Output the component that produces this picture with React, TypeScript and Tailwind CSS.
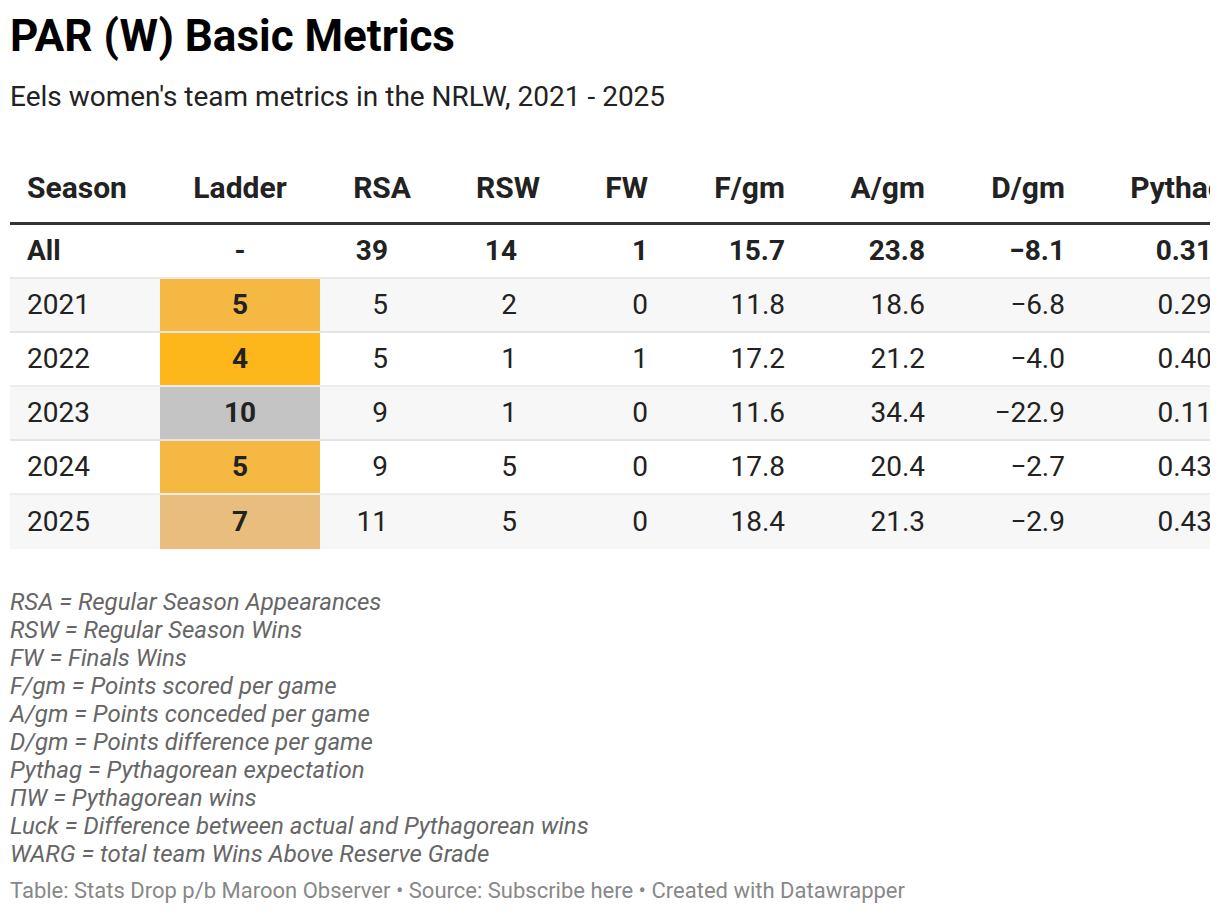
import React from "react";

type Row = {
  season: string;
  ladder: string;
  ladderBg: string;
  rsa: string;
  rsw: string;
  fw: string;
  fgm: string;
  agm: string;
  dgm: string;
  pythag: string;
  pw: string;
  luck: string;
  warg: string;
};

const rows: Row[] = [
  { season: "2021", ladder: "5", ladderBg: "bg-[#f5b843]", rsa: "5", rsw: "2", fw: "0", fgm: "11.8", agm: "18.6", dgm: "−6.8", pythag: "0.29", pw: "1.4", luck: "0.6", warg: "-0.3" },
  { season: "2022", ladder: "4", ladderBg: "bg-[#fdb71b]", rsa: "5", rsw: "1", fw: "1", fgm: "17.2", agm: "21.2", dgm: "−4.0", pythag: "0.40", pw: "2.0", luck: "-1.0", warg: "0.4" },
  { season: "2023", ladder: "10", ladderBg: "bg-[#c4c4c4]", rsa: "9", rsw: "1", fw: "0", fgm: "11.6", agm: "34.4", dgm: "−22.9", pythag: "0.11", pw: "1.0", luck: "0.0", warg: "-1.2" },
  { season: "2024", ladder: "5", ladderBg: "bg-[#f5b843]", rsa: "9", rsw: "5", fw: "0", fgm: "17.8", agm: "20.4", dgm: "−2.7", pythag: "0.43", pw: "3.9", luck: "1.1", warg: "0.8" },
  { season: "2025", ladder: "7", ladderBg: "bg-[#e8bd7d]", rsa: "11", rsw: "5", fw: "0", fgm: "18.4", agm: "21.3", dgm: "−2.9", pythag: "0.43", pw: "4.7", luck: "0.3", warg: "0.5" },
];

const notes = [
  "RSA = Regular Season Appearances",
  "RSW = Regular Season Wins",
  "FW = Finals Wins",
  "F/gm = Points scored per game",
  "A/gm = Points conceded per game",
  "D/gm = Points difference per game",
  "Pythag = Pythagorean expectation",
  "ΠW = Pythagorean wins",
  "Luck = Difference between actual and Pythagorean wins",
  "WARG = total team Wins Above Reserve Grade",
];

// shared cell widths for header and body
const w = {
  season: "w-[150px] shrink-0 pl-[17px] text-left",
  ladder: "w-[160px] shrink-0 text-center",
  rsa: "w-[110px] shrink-0 text-right",
  rsw: "w-[130px] shrink-0 text-right",
  fw: "w-[108px] shrink-0 text-right pr-[20px]",
  fgm: "w-[137px] shrink-0 text-right pr-[20px]",
  agm: "w-[140px] shrink-0 text-right pr-[20px]",
  dgm: "w-[140px] shrink-0 text-right pr-[20px]",
  pythag: "w-[145px] shrink-0 text-right",
  rest: "w-[120px] shrink-0 text-right pr-[20px]",
};

export default function App() {
  return (
    <div
      className="w-[1220px] h-[914px] overflow-hidden bg-white text-[#222] px-[10px] pt-[10px]"
      style={{ fontFamily: "Roboto, 'Liberation Sans', sans-serif" }}
    >
      <h1 className="text-[44px] leading-[52px] font-bold text-black">PAR (W) Basic Metrics</h1>
      <p className="mt-[18px] text-[28px] leading-[34px] text-[#222]">
        Eels women's team metrics in the NRLW, 2021 - 2025
      </p>

      {/* table */}
      <div className="mt-[39px] overflow-hidden">
        <div className="w-[1600px]">
          <div className="flex items-end h-[72px] pb-[16px] text-[30px] leading-[36px] font-bold border-b-[3px] border-[#333]">
            <div className={w.season}>Season</div>
            <div className={w.ladder}>Ladder</div>
            <div className={`${w.rsa} pr-[19px]`}>RSA</div>
            <div className={`${w.rsw} pr-[20px]`}>RSW</div>
            <div className={w.fw}>FW</div>
            <div className={w.fgm}>F/gm</div>
            <div className={w.agm}>A/gm</div>
            <div className={w.dgm}>D/gm</div>
            <div className={`${w.pythag} pr-[5px]`}>Pythag</div>
            <div className={w.rest}>ΠW</div>
            <div className={w.rest}>Luck</div>
            <div className={w.rest}>WARG</div>
          </div>

          <div className="flex items-center h-[54px] border-b-2 border-[#e8e8e8] text-[28px] leading-[34px] font-bold">
            <div className={w.season}>All</div>
            <div className={w.ladder}>-</div>
            <div className={`${w.rsa} pr-[42px]`}>39</div>
            <div className={`${w.rsw} pr-[43px]`}>14</div>
            <div className={w.fw}>1</div>
            <div className={w.fgm}>15.7</div>
            <div className={w.agm}>23.8</div>
            <div className={w.dgm}>−8.1</div>
            <div className={`${w.pythag} pr-[18px]`}>0.31</div>
            <div className={w.rest}>12.2</div>
            <div className={w.rest}>1.8</div>
            <div className={w.rest}>-0.2</div>
          </div>

          {rows.map((r, i) => (
            <div
              key={r.season}
              className={`flex h-[54px] text-[28px] leading-[34px] ${i % 2 === 0 ? "bg-[#f7f7f7]" : "bg-white"} ${
                i < rows.length - 1 ? "border-b-2 border-black/[0.07]" : "h-[52px]"
              }`}
            >
              <div className={`${w.season} self-center`}>{r.season}</div>
              <div className={`${w.ladder} ${r.ladderBg} font-bold flex items-center justify-center`}>{r.ladder}</div>
              <div className={`${w.rsa} pr-[42px] self-center`}>{r.rsa}</div>
              <div className={`${w.rsw} pr-[43px] self-center`}>{r.rsw}</div>
              <div className={`${w.fw} self-center`}>{r.fw}</div>
              <div className={`${w.fgm} self-center`}>{r.fgm}</div>
              <div className={`${w.agm} self-center`}>{r.agm}</div>
              <div className={`${w.dgm} self-center`}>{r.dgm}</div>
              <div className={`${w.pythag} pr-[18px] self-center`}>{r.pythag}</div>
              <div className={`${w.rest} self-center`}>{r.pw}</div>
              <div className={`${w.rest} self-center`}>{r.luck}</div>
              <div className={`${w.rest} self-center`}>{r.warg}</div>
            </div>
          ))}
        </div>
      </div>

      <div className="mt-[39px] text-[24px] leading-[28px] italic text-[#666]">
        {notes.map((n) => (
          <div key={n}>{n}</div>
        ))}
      </div>

      <div className="mt-[10px] text-[22px] leading-[26px] text-[#888]">
        Table: Stats Drop p/b Maroon Observer • Source: Subscribe here • Created with Datawrapper
      </div>
    </div>
  );
}
